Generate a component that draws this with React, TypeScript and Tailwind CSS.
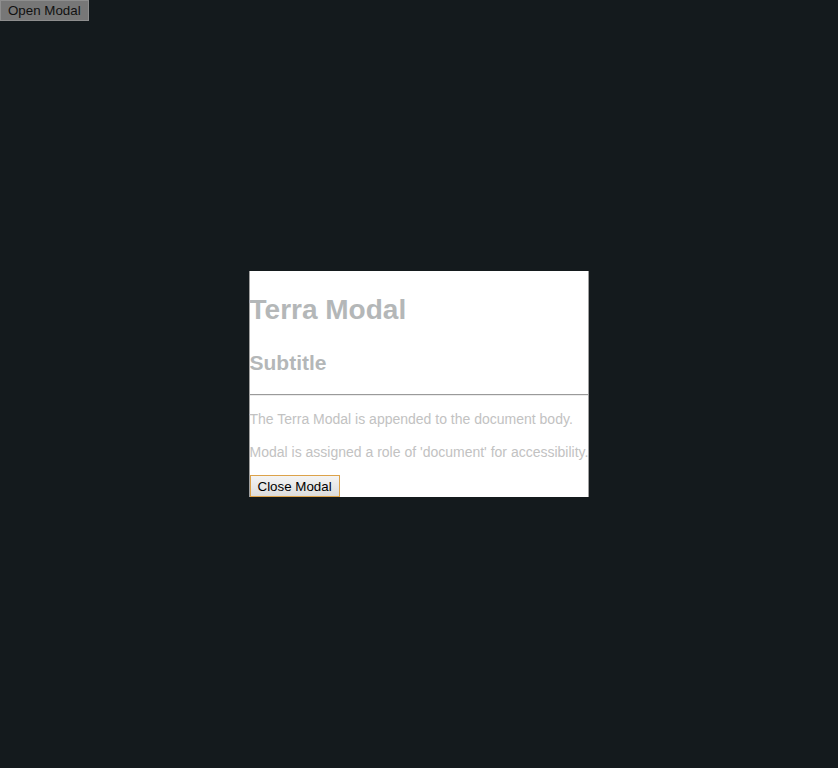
import React from "react";

export default function App() {
  return (
    <div className="min-h-screen w-full bg-[#141a1d] font-['Liberation_Sans',Arial,sans-serif]">
      <button className="block border border-[#8e8e8e] bg-[#777777] px-[7px] py-[1px] text-[13.33px] leading-[17px] text-[#111]">
        Open Modal
      </button>
      <div className="fixed inset-0 flex items-center justify-center">
        <div
          role="document"
          className="w-fit border-x border-x-[#a0a0a0] bg-white text-[14px] leading-[20px] text-[#c2c2c2]"
        >
          <h1 className="mt-[19px] text-[28px] font-bold leading-[40px] text-[#b4b7b8]">
            Terra Modal
          </h1>
          <h2 className="mt-[18px] text-[21px] font-bold leading-[30px] text-[#b4b7b8]">
            Subtitle
          </h2>
          <hr className="mt-[16px] h-0 border-t border-b border-t-[#9a9a9a] border-b-[#ececec]" />
          <p className="mt-[13px]">The Terra Modal is appended to the document body.</p>
          <p className="mt-[13px]">Modal is assigned a role of 'document' for accessibility.</p>
          <div className="mt-[13px]">
            <button className="block border border-[#dca24a] bg-gradient-to-b from-[#f4f4f4] to-[#dddddd] px-[7px] pt-[3px] pb-[1px] text-[13.33px] leading-[16px] text-black">
              Close Modal
            </button>
          </div>
        </div>
      </div>
    </div>
  );
}
